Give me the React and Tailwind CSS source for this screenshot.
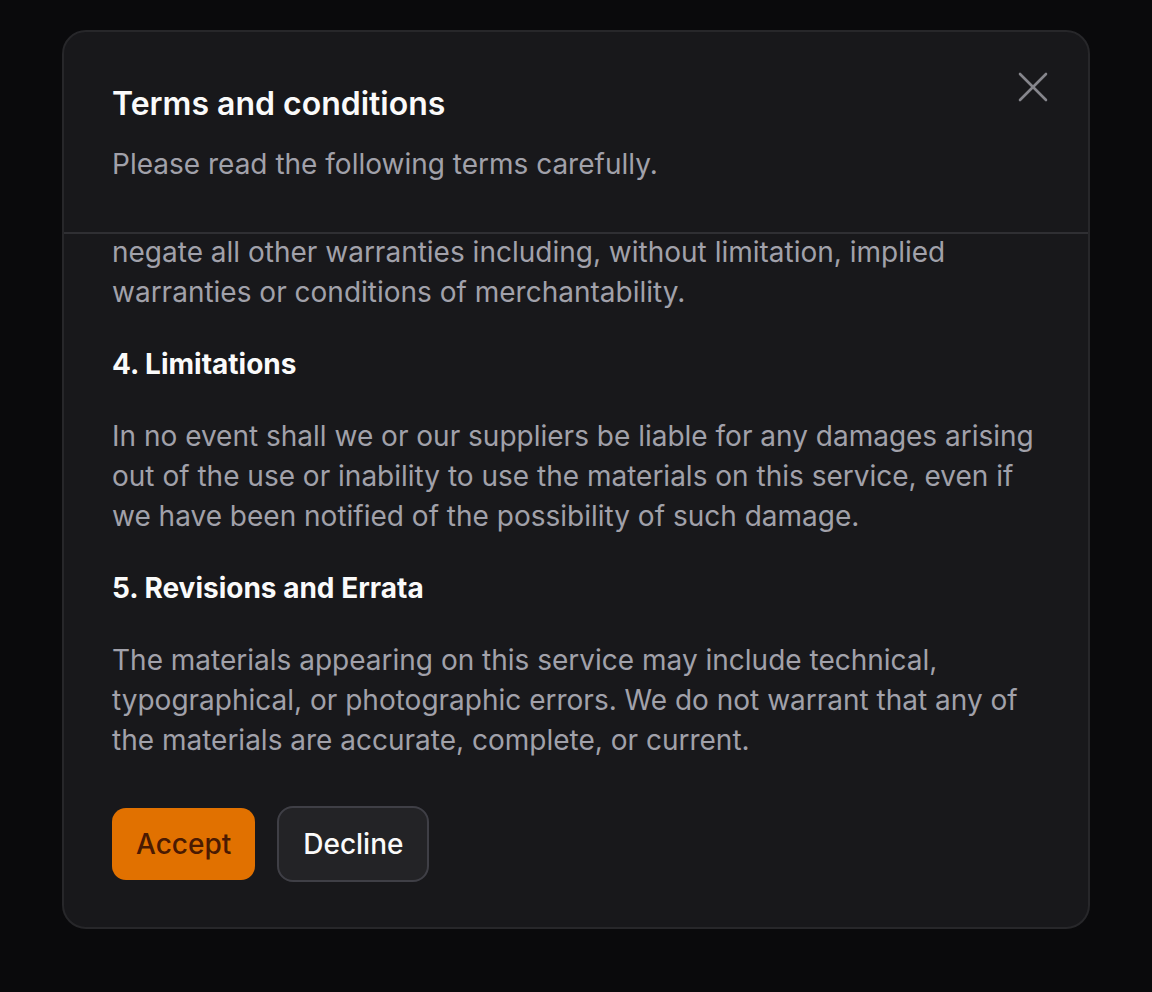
import React from 'react'

const SECTIONS = [
  {
    heading: '4. Limitations',
    body: 'In no event shall we or our suppliers be liable for any damages arising out of the use or inability to use the materials on this service, even if we have been notified of the possibility of such damage.',
  },
  {
    heading: '5. Revisions and Errata',
    body: 'The materials appearing on this service may include technical, typographical, or photographic errors. We do not warrant that any of the materials are accurate, complete, or current.',
  },
]

function CloseIcon() {
  return (
    <svg width="30" height="30" viewBox="0 0 30 30" fill="none" stroke="#85858c" strokeWidth="2.6" strokeLinecap="round">
      <path d="M2 2L28 28" />
      <path d="M28 2L2 28" />
    </svg>
  )
}

export default function App() {
  return (
    <div className="min-h-[992px] bg-[#0a0a0c] pt-[30px] font-['Inter',sans-serif]">
      <div className="mx-auto w-[1028px] rounded-[24px] border-2 border-[#27272a] bg-[#18181b]">
        {/* Header */}
        <div className="relative border-b-2 border-[#2f2f33] px-[48px] pt-[48px] pb-[48px]">
          <h2 className="text-[32px] leading-[48px] font-semibold text-[#fafafa]">Terms and conditions</h2>
          <p className="mt-[16px] text-[28px] leading-[40px] text-[#a1a1aa]">Please read the following terms carefully.</p>
          <button className="absolute right-[39px] top-[39px] p-[1px]">
            <CloseIcon />
          </button>
        </div>

        {/* Scrolled content */}
        <div className="overflow-hidden px-[48px] -mt-[2px]">
          <p className="text-[28px] leading-[40px] text-[#a1a1aa]">
            negate all other warranties including, without limitation, implied warranties or conditions of merchantability.
          </p>
          {SECTIONS.map((s) => (
            <div key={s.heading}>
              <h3 className="mt-[32px] text-[28px] leading-[40px] font-bold text-[#fafafa]">{s.heading}</h3>
              <p className="mt-[32px] text-[28px] leading-[40px] text-[#a1a1aa]">{s.body}</p>
            </div>
          ))}
        </div>

        {/* Footer */}
        <div className="flex items-center gap-[22px] px-[48px] pt-[46px] pb-[45px]">
          <button className="h-[72px] rounded-[14px] bg-[#e17100] px-[24px] text-[28px] font-medium text-[#4a1a02]">
            Accept
          </button>
          <button className="h-[76px] rounded-[16px] border-2 border-[#3f3f46] bg-[#232326] px-[24px] text-[28px] font-medium text-[#fafafa]">
            Decline
          </button>
        </div>
      </div>
    </div>
  )
}
